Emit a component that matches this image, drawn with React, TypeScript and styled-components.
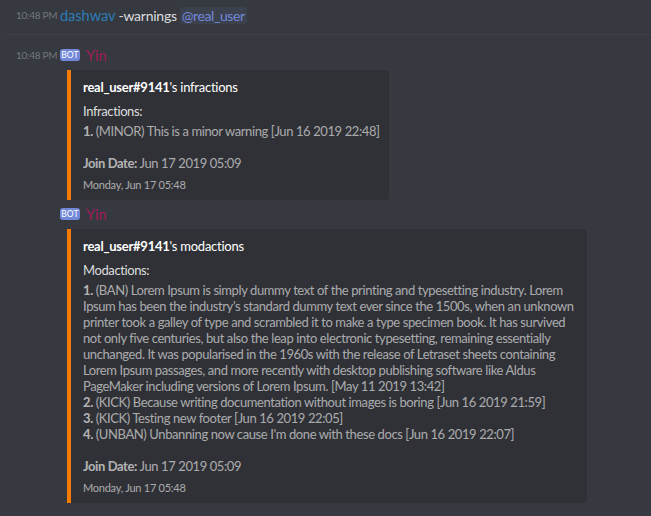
import styled, { createGlobalStyle } from "styled-components";

const GlobalStyle = createGlobalStyle`
  body {
    margin: 0;
    background: #36393f;
    font-family: Lato, "Noto Sans", sans-serif;
  }
`;

const Page = styled.div`
  padding-top: 5px;
  min-height: 516px;
  box-sizing: border-box;
`;

const Message = styled.div`
  display: flex;
  align-items: flex-start;
`;

const Stamp = styled.div`
  width: 44px;
  padding-left: 16px;
  flex-shrink: 0;
  font-size: 10px;
  line-height: 20px;
  letter-spacing: -0.3px;
  color: #72767d;
  white-space: nowrap;
`;

const Body = styled.div`
  display: flex;
  flex-direction: column;
  min-width: 0;
`;

const Header = styled.div`
  display: flex;
  align-items: center;
  height: 20px;
  font-size: 14px;
  letter-spacing: -0.25px;
  color: #dcddde;
  white-space: nowrap;
`;

const Name = styled.span<{ $color: string }>`
  color: ${(p) => p.$color};
  font-size: 14.5px;
  letter-spacing: 0;
  margin-right: 3px;
`;

const Mention = styled.span`
  margin-left: 3px;
  padding: 0 2px;
  color: #7289da;
  background: rgba(114, 137, 218, 0.1);
  border-radius: 3px;
  letter-spacing: -0.4px;
`;

const BotTag = styled.span`
  display: inline-flex;
  align-items: center;
  justify-content: center;
  width: 20px;
  height: 12px;
  margin-right: 6px;
  border-radius: 3px;
  background: #7289da;
  color: #fff;
  font-size: 8.5px;
  letter-spacing: 0.2px;
`;

const Divider = styled.div`
  height: 1px;
  margin: 9px 0 10px 6px;
  background: #3f4248;
`;

const Embed = styled.div`
  box-sizing: border-box;
  max-width: 520px;
  width: fit-content;
  margin: 5px 0 4px 7px;
  padding: 9px 9px 7px 12px;
  border-left: 4px solid #f47b00;
  border-radius: 0 3px 3px 0;
  background: #2f3136;
  font-size: 13px;
  line-height: 16px;
  letter-spacing: -0.4px;
`;

const Title = styled.div`
  color: #fff;
  letter-spacing: -0.25px;
  strong {
    font-weight: 700;
  }
`;

const FieldName = styled.div`
  margin-top: 8px;
  margin-bottom: 4px;
  color: #dcddde;
`;

const FieldValue = styled.div`
  color: rgba(255, 255, 255, 0.6);
  strong {
    font-weight: 700;
    color: rgba(255, 255, 255, 0.65);
  }
`;

const Footer = styled.div`
  margin-top: 6px;
  font-size: 11px;
  line-height: 16px;
  letter-spacing: -0.25px;
  color: rgba(255, 255, 255, 0.6);
`;

type Entry = { n: number; text: string };

const infractions: Entry[] = [
  { n: 1, text: "(MINOR) This is a minor warning [Jun 16 2019 22:48]" },
];

const modactions: Entry[] = [
  {
    n: 1,
    text:
      "(BAN) Lorem Ipsum is simply dummy text of the printing and typesetting industry. Lorem Ipsum has been the industry's standard dummy text ever since the 1500s, when an unknown printer took a galley of type and scrambled it to make a type specimen book. It has survived not only five centuries, but also the leap into electronic typesetting, remaining essentially unchanged. It was popularised in the 1960s with the release of Letraset sheets containing Lorem Ipsum passages, and more recently with desktop publishing software like Aldus PageMaker including versions of Lorem Ipsum. [May 11 2019 13:42]",
  },
  { n: 2, text: "(KICK) Because writing documentation without images is boring [Jun 16 2019 21:59]" },
  { n: 3, text: "(KICK) Testing new footer [Jun 16 2019 22:05]" },
  { n: 4, text: "(UNBAN) Unbanning now cause I'm done with these docs [Jun 16 2019 22:07]" },
];

const UserEmbed: React.FC<{ kind: string; label: string; entries: Entry[] }> = ({
  kind,
  label,
  entries,
}) => (
  <Embed>
    <Title>
      <strong>real_user#9141</strong>'s {kind}
    </Title>
    <FieldName>{label}</FieldName>
    <FieldValue>
      {entries.map((e) => (
        <div key={e.n}>
          <strong>{e.n}.</strong> {e.text}
        </div>
      ))}
      <br />
      <div>
        <strong>Join Date:</strong> Jun 17 2019 05:09
      </div>
    </FieldValue>
    <Footer>Monday, Jun 17 05:48</Footer>
  </Embed>
);

const BotHeader = () => (
  <Header>
    <BotTag>BOT</BotTag>
    <Name $color="#a3195b">Yin</Name>
  </Header>
);

export default function App() {
  return (
    <Page>
      <GlobalStyle />
      <Message>
        <Stamp>10:48 PM</Stamp>
        <Header>
          <Name $color="#2a7db8">dashwav</Name>
          -warnings
          <Mention>@real_user</Mention>
        </Header>
      </Message>
      <Divider />
      <Message>
        <Stamp>10:48 PM</Stamp>
        <Body>
          <BotHeader />
          <UserEmbed kind="infractions" label="Infractions:" entries={infractions} />
        </Body>
      </Message>
      <Message>
        <Stamp />
        <Body>
          <BotHeader />
          <UserEmbed kind="modactions" label="Modactions:" entries={modactions} />
        </Body>
      </Message>
    </Page>
  );
}
